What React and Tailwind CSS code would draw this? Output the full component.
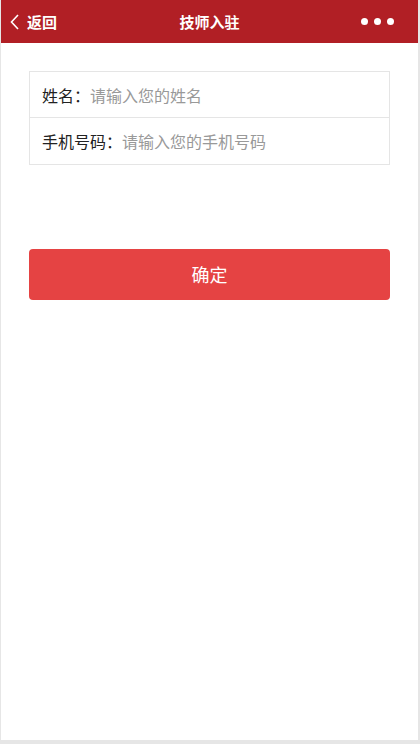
import React from "react";

export default function App() {
  const font = { fontFamily: '"Noto Sans CJK SC", "Noto Sans", sans-serif' };
  return (
    <div className="w-[420px] h-[744px] bg-[#e6e6e6] flex" style={font}>
      <div className="ml-px w-[417px] h-[740px] bg-white flex flex-col">
        <div className="h-[43px] bg-[#b11f25] flex items-center px-[8px] relative">
          <div className="flex items-center gap-[6px] text-white">
            <svg width="12" height="18" viewBox="0 0 12 18" fill="none">
              <path d="M9 2 L2.5 9 L9 16" stroke="white" strokeWidth="1.6" />
            </svg>
            <span className="text-[15px] font-bold leading-none">返回</span>
          </div>
          <div className="absolute left-0 right-0 top-0 h-full flex items-center justify-center pointer-events-none">
            <span className="text-white text-[15px] font-bold leading-none">技师入驻</span>
          </div>
          <div className="ml-auto mr-[16px] flex items-center gap-[6px]">
            <span className="w-[7px] h-[7px] rounded-full bg-white"></span>
            <span className="w-[7px] h-[7px] rounded-full bg-white"></span>
            <span className="w-[7px] h-[7px] rounded-full bg-white"></span>
          </div>
        </div>
        <div className="px-[28px] pt-[28px]">
          <div className="border border-[#e5e5e5] flex flex-col">
            <div className="h-[46px] flex items-center pl-[12px] text-[16px] border-b border-[#e5e5e5]">
              <span className="text-[#222]">姓名：</span>
              <span className="text-[#999]">请输入您的姓名</span>
            </div>
            <div className="h-[46px] flex items-center pl-[12px] text-[16px]">
              <span className="text-[#222]">手机号码：</span>
              <span className="text-[#999]">请输入您的手机号码</span>
            </div>
          </div>
          <div className="mt-[84px] h-[51px] rounded-[4px] bg-[#e54343] flex items-center justify-center text-white text-[18px]">
            确定
          </div>
        </div>
      </div>
    </div>
  );
}
